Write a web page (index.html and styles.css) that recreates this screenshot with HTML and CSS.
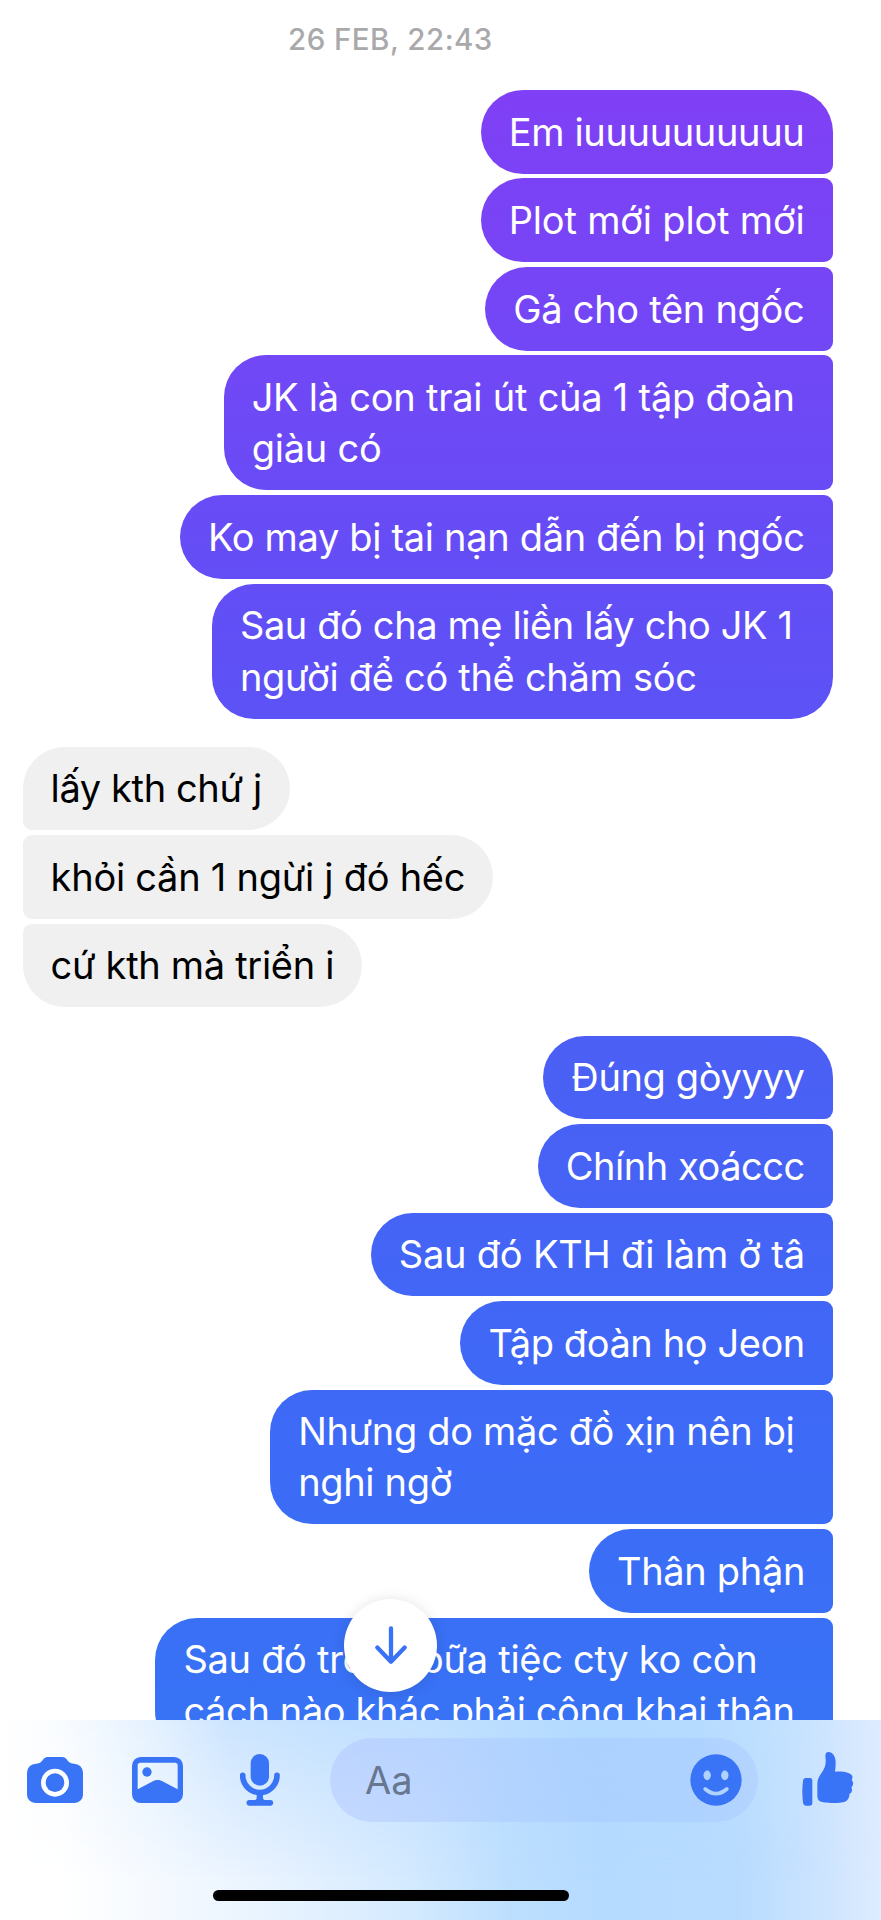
FILE: index.html
```html
<!DOCTYPE html>
<html lang="vi">
<head>
<meta charset="utf-8">
<title>Chat</title>
<link rel="stylesheet" href="styles.css">
</head>
<body>
<div class="screen">
  <main class="thread">
    <time class="stamp">26 FEB, 22:43</time>
    <section class="group sent">
      <p class="bubble" style="--w:352.1px;--ls:-.36px">Em iuuuuuuuuuu</p>
      <p class="bubble" style="--w:352.1px;--ls:-.18px">Plot mới plot mới</p>
      <p class="bubble" style="--w:347.5px;--ls:-.3px">Gả cho tên ngốc</p>
      <p class="bubble" style="--w:609.2px;--ls:-.24px">JK là con trai út của 1 tập đoàn<br>giàu có</p>
      <p class="bubble" style="--w:652.9px;--ls:-.32px">Ko may bị tai nạn dẫn đến bị ngốc</p>
      <p class="bubble" style="--w:620.9px;--ls:-.39px">Sau đó cha mẹ liền lấy cho JK 1<br><span class="loose">người để có thể chăm sóc</span></p>
    </section>
    <section class="group received">
      <p class="bubble" style="--w:267.3px;--ls:-.38px">lấy kth chứ j</p>
      <p class="bubble" style="--w:470.7px;--ls:-.26px">khỏi cần 1 ngừi j đó hếc</p>
      <p class="bubble" style="--w:339.4px;--ls:-.31px">cứ kth mà triển i</p>
    </section>
    <section class="group sent open">
      <p class="bubble" style="--w:289.5px;--ls:-.36px">Đúng gòyyyy</p>
      <p class="bubble" style="--w:295px;--ls:-.47px">Chính xoáccc</p>
      <p class="bubble" style="--w:462px;--ls:-.22px">Sau đó KTH đi làm ở tâ</p>
      <p class="bubble" style="--w:372.4px;--ls:-.41px">Tập đoàn họ Jeon</p>
      <p class="bubble" style="--w:562.7px;--ls:-.33px">Nhưng do mặc đồ xịn nên bị<br>nghi ngờ</p>
      <p class="bubble" style="--w:243.8px;--ls:-.33px">Thân phận</p>
      <p class="bubble" style="--w:677.4px;--ls:-.38px"><span class="loose">Sau đó trong bữa tiệc cty ko còn</span><br>cách nào khác phải công khai thân</p>
    </section>
  </main>
  <button class="scroll-down" aria-label="Scroll down">
    <svg width="36" height="42" viewBox="0 0 36 42" fill="none" stroke="currentColor" stroke-width="4.3" stroke-linecap="round" stroke-linejoin="round"><path d="M18 4.500V37.500M4.300 23.500L18 37.700L31.700 23.500"/></svg>
  </button>
  <footer class="composer">
    <div class="tools">
      <svg class="camera" width="56" height="46" viewBox="81 81 168 138"><path fill="currentColor" fill-rule="evenodd" d="M108 101c8 0 13-2 18-8c6-8 9-12 20-12h38c11 0 14 4 20 12c5 6 10 8 18 8a27 27 0 0 1 27 27v66a25 25 0 0 1-25 25H106a25 25 0 0 1-25-25v-66a27 27 0 0 1 27-27zM165 116a42 42 0 1 0 0 84a42 42 0 1 0 0-84z"/><circle cx="165" cy="158" r="28" fill="currentColor"/></svg>
      <svg class="photo" width="51" height="46" viewBox="396 81 153 138"><path fill="currentColor" fill-rule="evenodd" d="M422 81h101a26 26 0 0 1 26 26v86a26 26 0 0 1-26 26H422a26 26 0 0 1-26-26v-86a26 26 0 0 1 26-26zM421 98a8 8 0 0 0-8 8v72L456 155c11-7 23-7 34 0L533 178v-72a8 8 0 0 0-8-8z"/><circle cx="441" cy="126" r="14" fill="currentColor"/></svg>
      <svg class="mic" width="40" height="52" viewBox="721 73 120 156"><rect x="753" y="73" width="55" height="95" rx="27.500" fill="currentColor"/><path d="M729 137a51.500 51.500 0 0 0 103 0" fill="none" stroke="currentColor" stroke-width="17" stroke-linecap="round"/><path d="M771 192h19v12q0 7 8 7h14a8 8 0 0 1 0 17h-63a8 8 0 0 1 0-17h14q8 0 8-7z" fill="currentColor"/></svg>
      <div class="field">
        <span class="placeholder">Aa</span>
        <svg class="smile" width="52" height="52" viewBox="91.500 73 156 156"><circle cx="169.500" cy="151" r="77" fill="currentColor"/><g fill="#afd2ff"><ellipse cx="143" cy="137" rx="11" ry="14.500"/><ellipse cx="196" cy="137" rx="11" ry="14.500"/></g><path d="M137 178Q169.500 206 202 178" fill="none" stroke="#afd2ff" stroke-width="11" stroke-linecap="round"/></svg>
      </div>
      <svg class="thumb" width="52" height="54" viewBox="428 66 156 162"><g fill="currentColor"><path d="M439 144h13a7 7 0 0 1 7 7v69a7 7 0 0 1-7 7h-12q-7 0-9-9q-4-31 0-65q1-9 8-9z"/><path d="M498 78c0-8 3-12 9-12c13 0 22 13 22 31c0 11-1 20-2 28c14-1 29 0 40 4c9 3 14 8 12 15c0 3-1 5-2 6c6 6 6 16-1 22c4 8 2 17-6 20c1 10-3 15-9 21c-6 5-22 6-38 6c-21 0-34-1-41-5c-5-3-8-8-8-16v-35c0-18 8-27 14-36c9-13 12-24 11-39z"/></g></svg>
    </div>
    <div class="home-indicator"></div>
  </footer>
</div>
</body>
</html>
```
FILE: styles.css
```css
* { box-sizing: border-box; }
body { margin: 0; font-family: Inter, "Noto Sans", sans-serif; }
.screen { position: relative; width: 881px; height: 1920px; overflow: hidden; background: #fff; }
.thread { height: 1720px; overflow: hidden; }
.stamp {
  display: block; height: 90px; padding: 21px 0 0 288px;
  font-size: 29.5px; line-height: 36px; font-weight: 500; letter-spacing: .46px; color: #a9a9ab;
}
.group { display: flex; flex-direction: column; gap: 4.9px; margin-bottom: 28.3px; }
.sent { align-items: flex-end; padding-right: 48.2px; color: #fff; }
.received { align-items: flex-start; padding-left: 22.6px; }
.bubble {
  width: var(--w); margin: 0; padding: 16.6px 0 15.7px 28px;
  font-size: 38px; line-height: 51.3px; letter-spacing: var(--ls); white-space: nowrap;
}
.loose { letter-spacing: -.29px; }
.sent .bubble {
  border-radius: 42px 9px 9px 42px;
  background: linear-gradient(#8340f6 0, #8040f5 90px, #7048f6 380px, #5f50f6 650px, #4a60f5 1080px, #3e69f7 1400px, #3872f5 1700px, #3872f5 1920px) fixed;
}
.sent .bubble:first-child { border-top-right-radius: 42px; }
.sent:not(.open) .bubble:last-child { border-bottom-right-radius: 42px; }
.received .bubble { border-radius: 9px 42px 42px 9px; background: #f0f0f0; color: #000; }
.received .bubble:first-child { border-top-left-radius: 42px; }
.received .bubble:last-child { border-bottom-left-radius: 42px; }

.scroll-down {
  position: absolute; left: 344px; top: 1598.5px; width: 93px; height: 93px; padding: 0;
  display: flex; align-items: center; justify-content: center;
  border: 0; border-radius: 50%; background: #fff; color: #3a72f6;
  box-shadow: 0 1px 14px rgba(0, 0, 0, .12);
}

.composer {
  position: relative; height: 200px; color: #3973f6;
  background: linear-gradient(90deg, #fff 60px, #f6faff 150px, #e6f2ff 290px, #d4eaff 410px, #bddfff 510px, #b5dbff 600px, #b8dcff 740px, #cce4ff 820px, #deecff 881px);
}
.composer::before {
  content: ""; position: absolute; inset: 0;
  background: linear-gradient(90deg, #fff 0, #f9fcff 60px, #e4f1ff 150px, #cce4ff 230px, #c4e1ff 320px, #c0dfff 440px, #b3daff 580px, #b5dbff 700px, #c6e2ff 800px, #deebff 881px);
  -webkit-mask-image: linear-gradient(#000, transparent 80%);
  mask-image: linear-gradient(#000, transparent 80%);
}
.tools { position: relative; display: flex; align-items: center; padding: 18px 0 0 27px; }
.tools svg { flex: none; display: block; }
.photo { margin-left: 49px; }
.mic { margin-left: 57px; }
.field {
  display: flex; align-items: center; justify-content: space-between;
  width: 428.5px; height: 84px; margin: 0 44px 0 49.500px; padding: 0 16px 0 35.500px;
  border-radius: 42px;
  background: linear-gradient(90deg, rgba(165, 185, 255, .36), rgba(150, 180, 255, .24) 50%, rgba(150, 180, 255, .24));
}
.placeholder { font-size: 38px; line-height: 52px; color: #66778f; }
.thumb { margin-top: -2px; }
.home-indicator {
  position: relative; width: 356.500px; height: 11.800px; margin: 67.500px 0 0 212.500px;
  border-radius: 6px; background: #000;
}
```
